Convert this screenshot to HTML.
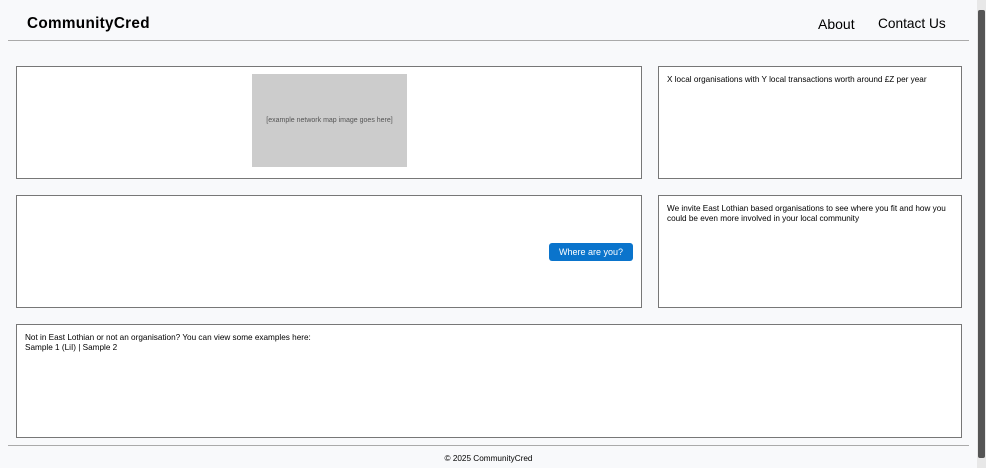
<!DOCTYPE html>
<html><head><style>
body{margin:0;width:986px;height:468px;background:#f8f9fb;font-family:"Liberation Sans",Arial,sans-serif;position:relative;overflow:hidden}
.a{position:absolute;box-sizing:border-box}
.box{border:1px solid #777;background:#fff;font-size:8.2px;color:#000;padding:8px 8px;line-height:9.5px}
</style></head><body>
<div class="a" style="left:27px;top:15px;font-size:15.3px;font-weight:bold;letter-spacing:0.3px">CommunityCred</div>
<div class="a" style="left:818px;top:16px;font-size:14px">About</div>
<div class="a" style="left:878px;top:16px;font-size:13.7px">Contact Us</div>
<div class="a" style="left:8px;top:40px;width:961px;height:1px;background:#aaa"></div>
<div class="a box" style="left:16px;top:66px;width:626px;height:113px">
<div class="a" style="left:235px;top:7px;width:155px;height:93px;background:#ccc;color:#555;font-size:7px;text-align:center;line-height:93px">[example network map image goes here]</div></div>
<div class="a box" style="left:658px;top:66px;width:304px;height:113px">X local organisations with Y local transactions worth around £Z per year</div>
<div class="a box" style="left:16px;top:195px;width:626px;height:113px">
<div class="a" style="left:532px;top:47px;width:84px;height:18px;background:#0a74cc;border-radius:3px;color:#fff;font-size:9px;text-align:center;line-height:18px">Where are you?</div></div>
<div class="a box" style="left:658px;top:195px;width:304px;height:113px">We invite East Lothian based organisations to see where you fit and how you could be even more involved in your local community</div>
<div class="a box" style="left:16px;top:324px;width:946px;height:114px">Not in East Lothian or not an organisation? You can view some examples here:<br>Sample 1 (LiI) | Sample 2</div>
<div class="a" style="left:8px;top:445px;width:961px;height:1px;background:#aaa"></div>
<div class="a" style="left:0;top:454px;width:977px;text-align:center;font-size:8.2px">© 2025 CommunityCred</div>
<div class="a" style="left:977px;top:0;width:9px;height:468px;background:#e8e8e8"></div>
<div class="a" style="left:978px;top:10px;width:7px;height:448px;background:#555;border-radius:2px"></div>
</body></html>
